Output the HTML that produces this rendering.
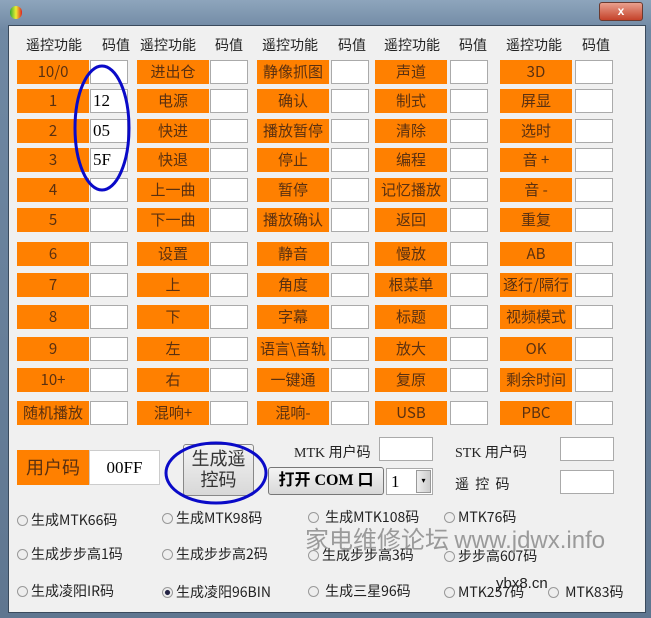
<!DOCTYPE html><html><head><meta charset="utf-8"><style>
body{margin:0;width:651px;height:618px;overflow:hidden;background:#4d6580;font-family:"Liberation Serif","Noto Sans CJK SC",serif;position:relative}
.win{position:absolute;left:0;top:0;width:651px;height:618px;background:linear-gradient(#8ea5bc,#6f88a3 30px,#5f7690)}
.c{position:absolute;left:8px;top:25px;width:636px;height:586px;background:#f0f0f0;border:1px solid #3a4a5c}
.a{position:absolute;font-size:14px;color:#222;white-space:nowrap}
.l{position:absolute;background:#ff8000;color:#5a3010;font-size:15px;text-align:center;height:24px;line-height:24px;width:72px;font-family:"Noto Sans CJK SC",sans-serif;font-weight:400;white-space:nowrap;overflow:hidden}
.v{position:absolute;background:#fff;border:1px solid #aaa;width:38px;height:24px;box-sizing:border-box;font-size:17px;line-height:22px;padding-left:2px}
.h{position:absolute;top:35px;font-size:14px;color:#222;font-family:"Noto Sans CJK SC",sans-serif}
.r{position:absolute;font-size:14px;color:#222;font-family:"Noto Sans CJK SC",sans-serif;white-space:nowrap}
.r i{display:inline-block;width:9px;height:9px;border-radius:50%;border:1px solid #999;background:#eee;margin-right:3px;vertical-align:-1px}
</style></head><body><div class="win">
<div style="position:absolute;left:10px;top:6px;width:12px;height:13px;border-radius:6px;background:linear-gradient(90deg,#3a3,#ee3 50%,#d22)"></div>
<div style="position:absolute;left:599px;top:2px;width:42px;height:17px;background:linear-gradient(#e9a08e,#c5422a);border:1px solid #6a3a30;border-radius:3px;color:#fff;font:bold 12px 'Liberation Sans';text-align:center;line-height:17px">x</div>
<div class="c"></div>
<div class="h" style="left:26px">遥控功能</div><div class="h" style="left:102px">码值</div>
<div class="h" style="left:140px">遥控功能</div><div class="h" style="left:215px">码值</div>
<div class="h" style="left:262px">遥控功能</div><div class="h" style="left:338px">码值</div>
<div class="h" style="left:384px">遥控功能</div><div class="h" style="left:459px">码值</div>
<div class="h" style="left:506px">遥控功能</div><div class="h" style="left:582px">码值</div>

<div class="l" style="left:17px;top:60px">10/0</div><div class="v" style="left:90px;top:60px"></div>
<div class="l" style="left:17px;top:89px">1</div><div class="v" style="left:90px;top:89px">12</div>
<div class="l" style="left:17px;top:119px">2</div><div class="v" style="left:90px;top:119px">05</div>
<div class="l" style="left:17px;top:148px">3</div><div class="v" style="left:90px;top:148px">5F</div>
<div class="l" style="left:17px;top:178px">4</div><div class="v" style="left:90px;top:178px"></div>
<div class="l" style="left:17px;top:208px">5</div><div class="v" style="left:90px;top:208px"></div>
<div class="l" style="left:17px;top:242px">6</div><div class="v" style="left:90px;top:242px"></div>
<div class="l" style="left:17px;top:273px">7</div><div class="v" style="left:90px;top:273px"></div>
<div class="l" style="left:17px;top:305px">8</div><div class="v" style="left:90px;top:305px"></div>
<div class="l" style="left:17px;top:337px">9</div><div class="v" style="left:90px;top:337px"></div>
<div class="l" style="left:17px;top:368px">10+</div><div class="v" style="left:90px;top:368px"></div>
<div class="l" style="left:17px;top:401px">随机播放</div><div class="v" style="left:90px;top:401px"></div>

<div class="l" style="left:137px;top:60px">进出仓</div><div class="v" style="left:210px;top:60px"></div>
<div class="l" style="left:137px;top:89px">电源</div><div class="v" style="left:210px;top:89px"></div>
<div class="l" style="left:137px;top:119px">快进</div><div class="v" style="left:210px;top:119px"></div>
<div class="l" style="left:137px;top:148px">快退</div><div class="v" style="left:210px;top:148px"></div>
<div class="l" style="left:137px;top:178px">上一曲</div><div class="v" style="left:210px;top:178px"></div>
<div class="l" style="left:137px;top:208px">下一曲</div><div class="v" style="left:210px;top:208px"></div>
<div class="l" style="left:137px;top:242px">设置</div><div class="v" style="left:210px;top:242px"></div>
<div class="l" style="left:137px;top:273px">上</div><div class="v" style="left:210px;top:273px"></div>
<div class="l" style="left:137px;top:305px">下</div><div class="v" style="left:210px;top:305px"></div>
<div class="l" style="left:137px;top:337px">左</div><div class="v" style="left:210px;top:337px"></div>
<div class="l" style="left:137px;top:368px">右</div><div class="v" style="left:210px;top:368px"></div>
<div class="l" style="left:137px;top:401px">混响+</div><div class="v" style="left:210px;top:401px"></div>

<div class="l" style="left:257px;top:60px">静像抓图</div><div class="v" style="left:331px;top:60px"></div>
<div class="l" style="left:257px;top:89px">确认</div><div class="v" style="left:331px;top:89px"></div>
<div class="l" style="left:257px;top:119px">播放暂停</div><div class="v" style="left:331px;top:119px"></div>
<div class="l" style="left:257px;top:148px">停止</div><div class="v" style="left:331px;top:148px"></div>
<div class="l" style="left:257px;top:178px">暂停</div><div class="v" style="left:331px;top:178px"></div>
<div class="l" style="left:257px;top:208px">播放确认</div><div class="v" style="left:331px;top:208px"></div>
<div class="l" style="left:257px;top:242px">静音</div><div class="v" style="left:331px;top:242px"></div>
<div class="l" style="left:257px;top:273px">角度</div><div class="v" style="left:331px;top:273px"></div>
<div class="l" style="left:257px;top:305px">字幕</div><div class="v" style="left:331px;top:305px"></div>
<div class="l" style="left:257px;top:337px">语言\音轨</div><div class="v" style="left:331px;top:337px"></div>
<div class="l" style="left:257px;top:368px">一键通</div><div class="v" style="left:331px;top:368px"></div>
<div class="l" style="left:257px;top:401px">混响-</div><div class="v" style="left:331px;top:401px"></div>

<div class="l" style="left:375px;top:60px">声道</div><div class="v" style="left:450px;top:60px"></div>
<div class="l" style="left:375px;top:89px">制式</div><div class="v" style="left:450px;top:89px"></div>
<div class="l" style="left:375px;top:119px">清除</div><div class="v" style="left:450px;top:119px"></div>
<div class="l" style="left:375px;top:148px">编程</div><div class="v" style="left:450px;top:148px"></div>
<div class="l" style="left:375px;top:178px">记忆播放</div><div class="v" style="left:450px;top:178px"></div>
<div class="l" style="left:375px;top:208px">返回</div><div class="v" style="left:450px;top:208px"></div>
<div class="l" style="left:375px;top:242px">慢放</div><div class="v" style="left:450px;top:242px"></div>
<div class="l" style="left:375px;top:273px">根菜单</div><div class="v" style="left:450px;top:273px"></div>
<div class="l" style="left:375px;top:305px">标题</div><div class="v" style="left:450px;top:305px"></div>
<div class="l" style="left:375px;top:337px">放大</div><div class="v" style="left:450px;top:337px"></div>
<div class="l" style="left:375px;top:368px">复原</div><div class="v" style="left:450px;top:368px"></div>
<div class="l" style="left:375px;top:401px">USB</div><div class="v" style="left:450px;top:401px"></div>

<div class="l" style="left:500px;top:60px">3D</div><div class="v" style="left:575px;top:60px"></div>
<div class="l" style="left:500px;top:89px">屏显</div><div class="v" style="left:575px;top:89px"></div>
<div class="l" style="left:500px;top:119px">选时</div><div class="v" style="left:575px;top:119px"></div>
<div class="l" style="left:500px;top:148px">音 +</div><div class="v" style="left:575px;top:148px"></div>
<div class="l" style="left:500px;top:178px">音 -</div><div class="v" style="left:575px;top:178px"></div>
<div class="l" style="left:500px;top:208px">重复</div><div class="v" style="left:575px;top:208px"></div>
<div class="l" style="left:500px;top:242px">AB</div><div class="v" style="left:575px;top:242px"></div>
<div class="l" style="left:500px;top:273px">逐行/隔行</div><div class="v" style="left:575px;top:273px"></div>
<div class="l" style="left:500px;top:305px">视频模式</div><div class="v" style="left:575px;top:305px"></div>
<div class="l" style="left:500px;top:337px">OK</div><div class="v" style="left:575px;top:337px"></div>
<div class="l" style="left:500px;top:368px">剩余时间</div><div class="v" style="left:575px;top:368px"></div>
<div class="l" style="left:500px;top:401px">PBC</div><div class="v" style="left:575px;top:401px"></div>

<svg style="position:absolute;left:70px;top:62px" width="65" height="132"><ellipse cx="32" cy="66" rx="27" ry="62" fill="none" stroke="#0a0ac8" stroke-width="3"/></svg>

<div class="l" style="left:17px;top:450px;width:72px;height:35px;line-height:35px;font-size:18px">用户码</div>
<div style="position:absolute;left:89px;top:450px;width:71px;height:35px;background:#fff;border:1px solid #ccc;box-sizing:border-box;font-size:17px;line-height:33px;text-align:center">00FF</div>
<div style="position:absolute;left:183px;top:444px;width:71px;height:52px;background:linear-gradient(#f2f2f2,#d8d8d8);border:1px solid #888;border-radius:3px;box-sizing:border-box;font:18px/21px 'Noto Sans CJK SC',sans-serif;text-align:center;padding-top:3px;color:#333">生成遥<br>控码</div>
<svg style="position:absolute;left:163px;top:440px" width="106" height="66"><ellipse cx="53" cy="33" rx="50" ry="30" fill="none" stroke="#0a0ac8" stroke-width="3"/></svg>
<div style="position:absolute;left:268px;top:467px;width:116px;height:28px;background:linear-gradient(#f4f4f4,#d8d8d8);border:1px solid #777;border-radius:3px;box-sizing:border-box;font:bold 16px/26px 'Liberation Serif','Noto Sans CJK SC',serif;text-align:center">打开 COM 口</div>
<div style="position:absolute;left:386px;top:468px;width:47px;height:27px;background:#fff;border:1px solid #aaa;box-sizing:border-box;font-size:17px;line-height:25px;padding-left:4px">1</div>
<div style="position:absolute;left:416px;top:470px;width:15px;height:23px;background:linear-gradient(90deg,#eee,#ccc);border:1px solid #999;box-sizing:border-box;font-size:8px;text-align:center;line-height:20px">▾</div>
<div class="a" style="left:294px;top:442px">MTK 用户码</div>
<div class="v" style="left:379px;top:437px;width:54px;height:24px"></div>
<div class="a" style="left:455px;top:442px">STK 用户码</div>
<div class="v" style="left:560px;top:437px;width:54px;height:24px"></div>
<div class="a" style="left:455px;top:474px;font-family:'Noto Sans CJK SC',sans-serif">遥&nbsp;&nbsp;控&nbsp;&nbsp;码</div>
<div class="v" style="left:560px;top:470px;width:54px;height:24px"></div>

<div class="r" style="left:17px;top:510px"><i></i>生成MTK66码</div>
<div class="r" style="left:162px;top:508px"><i></i>生成MTK98码</div>
<div class="r" style="left:308px;top:507px"><i></i> 生成MTK108码</div>
<div class="r" style="left:444px;top:507px"><i></i>MTK76码</div>
<div class="r" style="left:17px;top:544px"><i></i>生成步步高1码</div>
<div class="r" style="left:162px;top:544px"><i></i>生成步步高2码</div>
<div class="r" style="left:308px;top:545px"><i></i>生成步步高3码</div>
<div class="r" style="left:444px;top:546px"><i></i>步步高607码</div>
<div class="r" style="left:17px;top:581px"><i></i>生成凌阳IR码</div>
<div class="r" style="left:162px;top:582px"><i style="background:radial-gradient(#224 35%,#eee 45%)"></i>生成凌阳96BIN</div>
<div class="r" style="left:308px;top:581px"><i></i> 生成三星96码</div>
<div class="r" style="left:444px;top:582px"><i></i>MTK257码</div>
<div class="r" style="left:548px;top:582px"><i></i> MTK83码</div>
<div style="position:absolute;left:305px;top:520px;font:24px 'Noto Sans CJK SC',sans-serif;color:#9a9a9a;white-space:nowrap">家电维修论坛 <span style="font-family:'Liberation Sans'">www.jdwx.info</span></div>
<div style="position:absolute;left:496px;top:575px;font:15px 'Liberation Sans';color:#222">ybx8.cn</div>
</div></body></html>
